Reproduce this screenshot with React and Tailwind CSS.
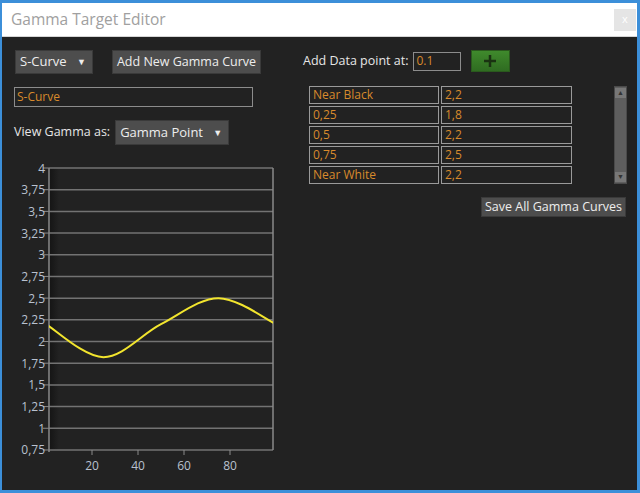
import React from 'react';

const font = { fontFamily: '"Open Sans", "Noto Sans", sans-serif' };

const rows = [
  ['Near Black', '2,2'],
  ['0,25', '1,8'],
  ['0,5', '2,2'],
  ['0,75', '2,5'],
  ['Near White', '2,2'],
];

const points = [
  [0, 2.2],
  [25, 1.82],
  [50, 2.2],
  [75, 2.5],
  [100, 2.2],
];

const toX = (d) => 44 + 2.3 * d;
const toY = (v) => 9 + (4 - v) * 86.77;

const curvePath = () => {
  const p = points.map(([d, v]) => [toX(d), toY(v)]);
  let s = `M${p[0][0]},${p[0][1]}`;
  for (let i = 0; i < p.length - 1; i++) {
    const p0 = p[i - 1] || p[i];
    const p1 = p[i];
    const p2 = p[i + 1];
    const p3 = p[i + 2] || p2;
    const c1 = [p1[0] + (p2[0] - p0[0]) / 6, p1[1] + (p2[1] - p0[1]) / 6];
    const c2 = [p2[0] - (p3[0] - p1[0]) / 6, p2[1] - (p3[1] - p1[1]) / 6];
    s += ` C${c1[0]},${c1[1]} ${c2[0]},${c2[1]} ${p2[0]},${p2[1]}`;
  }
  return s;
};

const yLabels = ['4', '3,75', '3,5', '3,25', '3', '2,75', '2,5', '2,25', '2', '1,75', '1,5', '1,25', '1', '0,75'];

const Chart = () => (
  <svg width="280" height="320" className="block" style={font}>
    <defs>
      <linearGradient id="shade" x1="0" x2="1" y1="0" y2="0">
        <stop offset="0" stopColor="#111" stopOpacity="0.8" />
        <stop offset="1" stopColor="#111" stopOpacity="0" />
      </linearGradient>
      <clipPath id="plot">
        <rect x="47" y="9" width="224" height="282" />
      </clipPath>
    </defs>
    <rect x="47" y="9" width="10" height="282" fill="url(#shade)" />
    {yLabels.map((l, i) => {
      const y = 9 + i * 21.69;
      return (
        <g key={l}>
          <line x1="47" x2="271" y1={y} y2={y} stroke="#737373" strokeWidth="1.5" />
          <line x1="41" x2="47" y1={y} y2={y} stroke="#8a8a8a" strokeWidth="1" />
          <text x="43" y={y + 4.5} textAnchor="end" fontSize="12" fill="#b9c1cf">{l}</text>
        </g>
      );
    })}
    <line x1="47" x2="47" y1="9" y2="293" stroke="#8a8a8a" strokeWidth="1.5" />
    <line x1="271" x2="271" y1="9" y2="291" stroke="#8a8a8a" strokeWidth="1.5" />
    {[20, 40, 60, 80].map((d) => (
      <g key={d}>
        <line x1={toX(d)} x2={toX(d)} y1="291" y2="296" stroke="#8a8a8a" strokeWidth="1" />
        <text x={toX(d)} y="311" textAnchor="middle" fontSize="12" fill="#b9c1cf">{d}</text>
      </g>
    ))}
    <path d={curvePath()} fill="none" stroke="#f2e52e" strokeWidth="2" clipPath="url(#plot)" />
  </svg>
);

const Dropdown = ({ label, className }) => (
  <div className={`flex items-center justify-between bg-[#4d4d4d] border border-[#3a3a3a] text-[#ededed] text-[13px] pl-[4px] pr-[6px] ${className}`}>
    <span>{label}</span>
    <span className="text-[9px]">▼</span>
  </div>
);

export default function App() {
  return (
    <div className="w-[640px] h-[493px] flex flex-col bg-[#3c8fd9] pl-[2px] pr-[3px] pt-[3px] pb-[3px] overflow-hidden" style={font}>
      <div className="h-[34px] bg-white flex items-center justify-between border-b border-[#d6d6d6] shrink-0">
        <span className="pl-[9px] text-[15.5px] text-[#a0a0a0]">Gamma Target Editor</span>
        <div className="w-[22px] h-[22px] mr-[1px] bg-[#e5e5e5] flex items-center justify-center text-white text-[11px]">x</div>
      </div>
      <div className="flex-1 bg-[#222222] flex">
        <div className="w-[290px] flex flex-col">
          <div className="flex items-center pt-[13px] pl-[13px] gap-[19px]">
            <Dropdown label="S-Curve" className="w-[78px] h-[24px]" />
            <div className="h-[24px] w-[149px] bg-[#4d4d4d] border border-[#3a3a3a] text-[#ededed] text-[12.5px] flex items-center justify-center">Add New Gamma Curve</div>
          </div>
          <div className="ml-[12px] mt-[13px] w-[239px] h-[20px] border border-[#8c8c8c] text-[#d88a2c] text-[12px] pl-[2px] flex items-center">S-Curve</div>
          <div className="flex items-center ml-[12px] mt-[13px] gap-[5px]">
            <span className="text-[12.5px] text-[#e6e6e6]">View Gamma as:</span>
            <Dropdown label="Gamma Point" className="w-[114px] h-[25px]" />
          </div>
          <div className="mt-[14px]">
            <Chart />
          </div>
        </div>
        <div className="flex-1 flex flex-col">
          <div className="flex items-center pt-[13px] pl-[11px]">
            <span className="text-[12.5px] text-[#e6e6e6]">Add Data point at:</span>
            <div className="ml-[4px] w-[48px] h-[19px] border border-[#8c8c8c] text-[#d88a2c] text-[12px] pl-[3px] flex items-center">0.1</div>
            <div className="ml-[10px] w-[39px] h-[22px] bg-gradient-to-b from-[#3f8a2c] to-[#2f6c21] border border-[#2a5a1d] flex items-center justify-center">
              <svg width="14" height="14" viewBox="0 0 14 14">
                <path d="M7 1v12M1 7h12" stroke="#1a3212" strokeWidth="2.5" />
              </svg>
            </div>
          </div>
          <div className="flex mt-[14px] pl-[17px]">
            <div className="w-[263px] flex flex-col gap-[2px]">
              {rows.map(([a, b]) => (
                <div key={a} className="flex gap-[2px] h-[18px]">
                  <div className="w-[130px] border border-[#9a9a9a] text-[#d88a2c] text-[12px] pl-[3px] flex items-center">{a}</div>
                  <div className="flex-1 border border-[#9a9a9a] text-[#d88a2c] text-[12px] pl-[3px] flex items-center">{b}</div>
                </div>
              ))}
            </div>
            <div className="ml-[42px] w-[13px] h-[98px] bg-[#5e5e5e] border border-[#4a4a4a] flex flex-col justify-between items-center py-[1px]">
              <span className="w-[11px] h-[10px] bg-[#777] text-[#333] text-[7px] leading-[10px] text-center">▲</span>
              <span className="w-[11px] h-[10px] bg-[#777] text-[#333] text-[7px] leading-[10px] text-center">▼</span>
            </div>
          </div>
          <div className="flex justify-end pr-[11px] mt-[13px]">
            <div className="w-[145px] h-[20px] bg-[#4d4d4d] border border-[#3a3a3a] text-[#ededed] text-[12.5px] flex items-center justify-center">Save All Gamma Curves</div>
          </div>
        </div>
      </div>
    </div>
  );
}
